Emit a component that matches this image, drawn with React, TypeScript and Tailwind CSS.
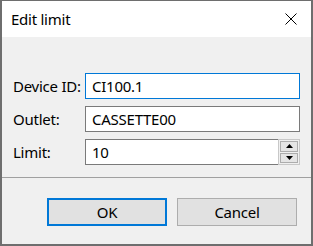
export default function App() {
  const font = { fontFamily: '"Noto Sans", "Segoe UI", sans-serif' };
  return (
    <div className="w-[313px] h-[246px] bg-white tracking-[-0.25px]" style={font}>
      <div className="w-[313px] h-[246px] border-t border-l-2 border-r-2 border-b-2 border-[#6e6e6e] flex flex-col bg-[#f0f0f0]">
        {/* title bar */}
        <div className="h-[36px] bg-white flex items-center justify-between pl-[9px] pr-[14px] shrink-0">
          <span className="text-[15px] text-black leading-none">Edit limit</span>
          <svg width="12" height="12" viewBox="0 0 12 12">
            <path d="M0.5 0.5 L11.5 11.5 M11.5 0.5 L0.5 11.5" stroke="#000" strokeWidth="1" />
          </svg>
        </div>

        {/* fields */}
        <div className="flex flex-col gap-[7px] pt-[36px] pl-[11px] pr-[11px]">
          <div className="flex items-center h-[26px]">
            <span className="w-[72px] text-[15px] text-black">Device ID:</span>
            <div className="flex-1 h-[26px] border border-[#0078d7] bg-white flex items-center pl-[6px] text-[15px] text-black">CI100.1</div>
          </div>
          <div className="flex items-center h-[26px]">
            <span className="w-[72px] text-[15px] text-black">Outlet:</span>
            <div className="flex-1 h-[26px] border border-[#7a7a7a] bg-white flex items-center pl-[6px] text-[15px] text-black">CASSETTE00</div>
          </div>
          <div className="flex items-center h-[26px]">
            <span className="w-[72px] text-[15px] text-black">Limit:</span>
            <div className="flex-1 h-[26px] border-y border-l border-[#7a7a7a] bg-white flex items-center">
              <span className="flex-1 pl-[6px] text-[15px] text-black">10</span>
              <div className="w-[22px] h-[26px] -my-px border border-[#c8c8c8] bg-[#f0f0f0] flex flex-col gap-px p-px">
                <div className="flex-1 bg-[#e5e5e5] border border-[#adadad] flex items-center justify-center">
                  <svg width="7" height="4" viewBox="0 0 7 4"><path d="M0 4 L3.5 0 L7 4 Z" fill="#000" /></svg>
                </div>
                <div className="flex-1 bg-[#e5e5e5] border border-[#adadad] flex items-center justify-center">
                  <svg width="7" height="4" viewBox="0 0 7 4"><path d="M0 0 L3.5 4 L7 0 Z" fill="#000" /></svg>
                </div>
              </div>
            </div>
          </div>
        </div>

        {/* separator */}
        <div className="mt-[12px] h-px bg-[#a0a0a0]" />

        {/* buttons */}
        <div className="flex justify-end gap-[10px] pt-[20px] pr-[14px]">
          <button className="w-[120px] h-[28px] border-2 border-[#0078d7] bg-[#e1e1e1] text-[15px] text-black">OK</button>
          <button className="w-[120px] h-[28px] border border-[#adadad] bg-[#e1e1e1] text-[15px] text-black">Cancel</button>
        </div>
      </div>
    </div>
  );
}
